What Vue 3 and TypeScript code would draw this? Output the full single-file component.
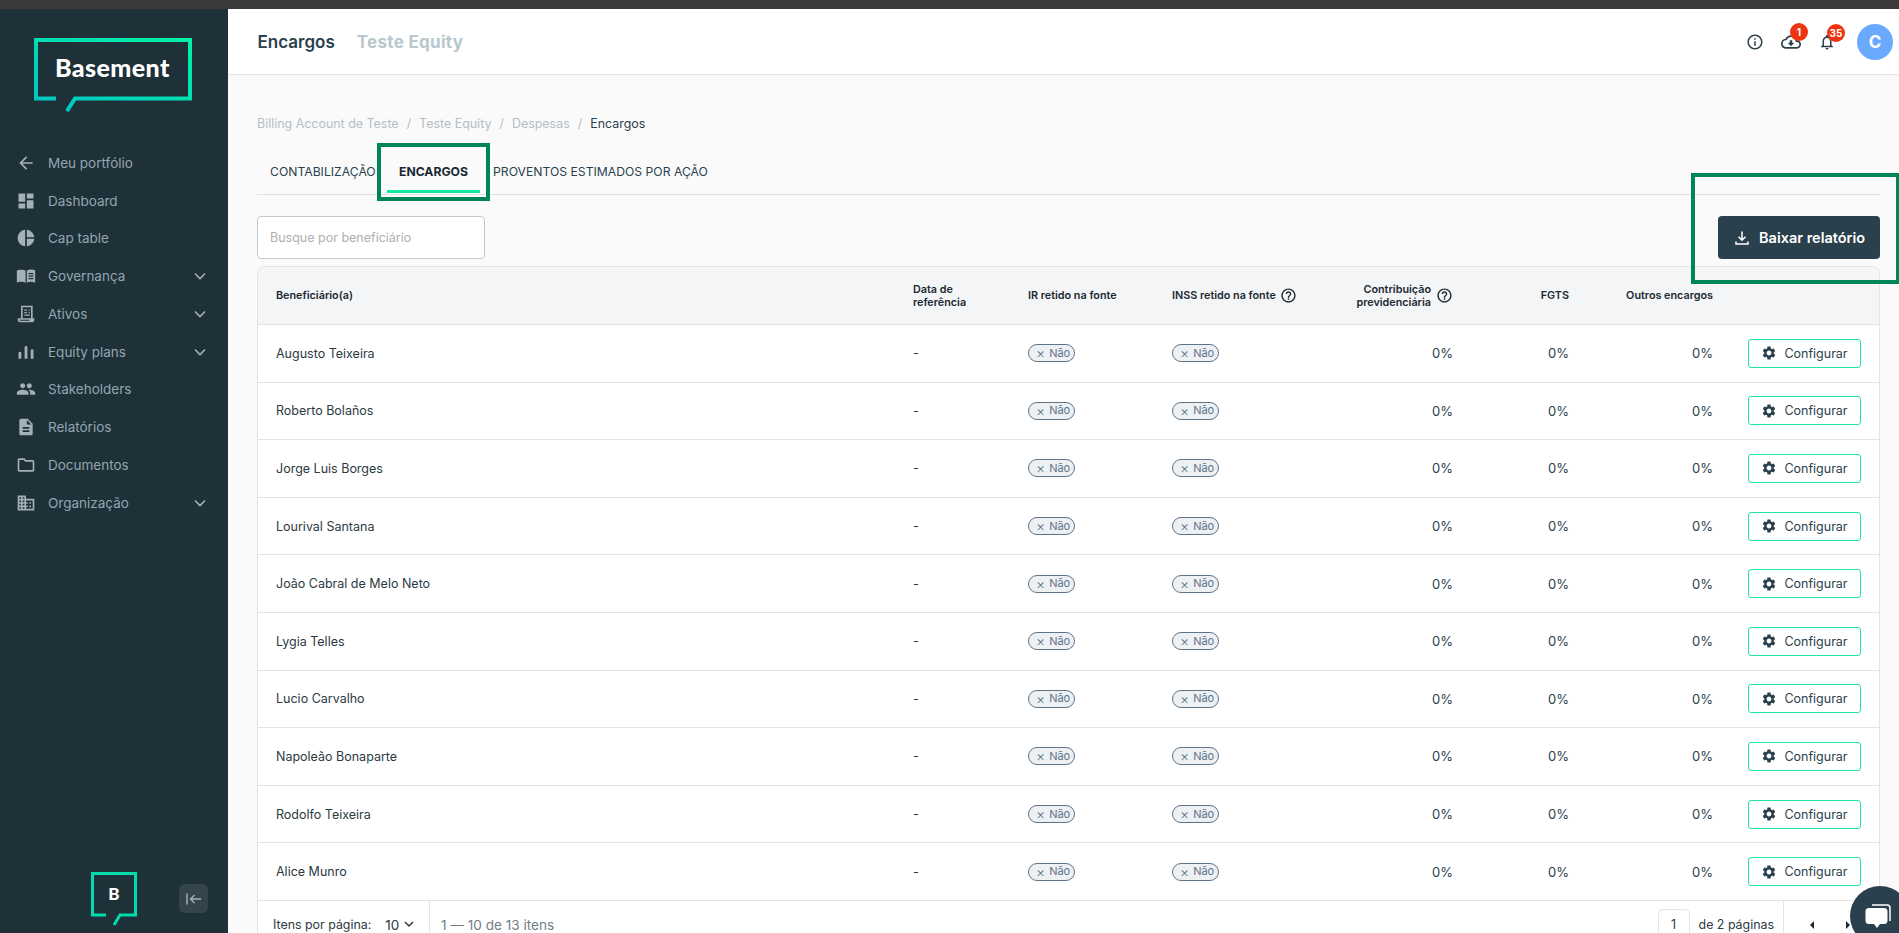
<template>
  <div class="page">
    <div class="window-strip"></div>
    <div class="shell">
      <aside class="sidebar">
        <svg class="logo" width="160" height="76" viewBox="0 0 160 76">
          <defs>
            <linearGradient id="logoStroke" x1="0" y1="1" x2="1" y2="0">
              <stop offset="0" stop-color="#00c4c4" />
              <stop offset="1" stop-color="#00f2a6" />
            </linearGradient>
          </defs>
          <path d="M22 60.5H2V2h154v58.5H41L33 73" fill="none" stroke="url(#logoStroke)" stroke-width="4" />
          <text x="21" y="39" class="logo-text">Basement</text>
        </svg>

        <nav class="nav">
          <a v-for="item in navItems" :key="item.label" class="nav-item">
            <svg class="nav-icon" viewBox="0 0 24 24" width="20" height="20">
              <path :d="item.icon" fill="currentColor" fill-rule="evenodd" />
            </svg>
            <span class="nav-label">{{ item.label }}</span>
            <svg v-if="item.expandable" class="nav-chevron" viewBox="0 0 12 8" width="12" height="8">
              <path d="M1 1.5l5 5 5-5" fill="none" stroke="currentColor" stroke-width="1.6" />
            </svg>
          </a>
        </nav>

        <div class="sidebar-foot">
          <svg class="logo-small" width="46" height="54" viewBox="0 0 46 54">
            <path d="M15 43H1.500V1.500h43V43H29l-6 10" fill="none" stroke="#00dcae" stroke-width="3" />
            <text x="23" y="28" text-anchor="middle" class="logo-small-text">B</text>
          </svg>
          <button class="collapse-btn" type="button">
            <svg viewBox="0 0 16 12" width="16" height="12">
              <path d="M1 0.500v11M15 6H4.500M8.500 2L4.500 6l4 4" fill="none" stroke="currentColor" stroke-width="1.4" />
            </svg>
          </button>
        </div>
      </aside>

      <main class="main">
        <header class="topbar">
          <div class="topbar-title">
            <span class="title-main">Encargos</span>
            <span class="title-sub">Teste Equity</span>
          </div>
          <div class="topbar-actions">
            <svg class="top-icon" viewBox="0 0 24 24" width="18" height="18">
              <path :d="icons.info" fill="currentColor" />
            </svg>
            <span class="top-badge-wrap">
              <svg class="top-icon" viewBox="0 0 24 24" width="20" height="20">
                <path :d="icons.cloud" fill="currentColor" />
              </svg>
              <span class="badge">1</span>
            </span>
            <span class="top-badge-wrap">
              <svg class="top-icon" viewBox="0 0 24 24" width="18" height="18">
                <path :d="icons.bell" fill="currentColor" />
              </svg>
              <span class="badge">35</span>
            </span>
            <span class="avatar">C</span>
          </div>
        </header>

        <section class="content">
          <div class="breadcrumb">
            <span>Billing Account de Teste</span><i>/</i>
            <span>Teste Equity</span><i>/</i>
            <span>Despesas</span><i>/</i>
            <span class="breadcrumb-current">Encargos</span>
          </div>

          <div class="tabs">
            <span class="tab tab-first">CONTABILIZAÇÃO</span>
            <span class="tab is-active">ENCARGOS</span>
            <span class="tab">PROVENTOS ESTIMADOS POR AÇÃO</span>
          </div>

          <div class="toolbar">
            <input class="search" type="text" placeholder="Busque por beneficiário" />
            <button class="download-btn" type="button">
              <svg viewBox="0 0 16 16" width="16" height="16">
                <path d="M8 1.500v8.500M4.500 6.800L8 10.300l3.500-3.500M2 11.500v2.500h12v-2.500" fill="none" stroke="currentColor" stroke-width="1.500" />
              </svg>
              Baixar relatório
            </button>
          </div>

          <div class="table">
            <div class="row row-head">
              <div class="cell">Beneficiário(a)</div>
              <div class="cell">Data de<br />referência</div>
              <div class="cell">IR retido na fonte</div>
              <div class="cell cell-help">
                INSS retido na fonte
                <svg class="help" viewBox="0 0 24 24" width="17" height="17"><path :d="icons.help" fill="currentColor" /></svg>
              </div>
              <div class="cell cell-right">
                <span>Contribuição<br />previdenciária</span>
                <svg class="help" viewBox="0 0 24 24" width="17" height="17"><path :d="icons.help" fill="currentColor" /></svg>
              </div>
              <div class="cell cell-right">FGTS</div>
              <div class="cell cell-right">Outros encargos</div>
              <div class="cell"></div>
            </div>

            <div v-for="name in people" :key="name" class="row">
              <div class="cell cell-name">{{ name }}</div>
              <div class="cell">-</div>
              <div class="cell"><span class="chip"><b>×</b>Não</span></div>
              <div class="cell"><span class="chip"><b>×</b>Não</span></div>
              <div class="cell cell-right">0%</div>
              <div class="cell cell-right">0%</div>
              <div class="cell cell-right">0%</div>
              <div class="cell cell-action">
                <button class="config-btn" type="button">
                  <svg viewBox="0 0 24 24" width="16" height="16"><path :d="icons.gear" fill="currentColor" fill-rule="evenodd" /></svg>
                  Configurar
                </button>
              </div>
            </div>

            <div class="pager">
              <div class="pager-left">
                <span>Itens por página:</span>
                <span class="pager-size">
                  10
                  <svg viewBox="0 0 10 7" width="10" height="7"><path d="M1 1l4 4 4-4" fill="none" stroke="currentColor" stroke-width="1.500" /></svg>
                </span>
              </div>
              <div class="pager-count">1 — 10 de 13 itens</div>
              <div class="pager-right">
                <span class="pager-page">1</span>
                <span class="pager-total">de 2 páginas</span>
                <div class="pager-arrows">
                  <span class="arrow arrow-prev"></span>
                  <span class="arrow arrow-next"></span>
                </div>
              </div>
            </div>
          </div>
        </section>
      </main>
    </div>

    <!-- marcações verdes por cima do print -->
    <div class="mark mark-tab"></div>
    <div class="mark mark-download"></div>

    <div class="chat">
      <svg viewBox="0 0 30 30" width="30" height="30">
        <path d="M9 4h15a3 3 0 0 1 3 3v13" fill="none" stroke="#fff" stroke-width="1.500" />
        <path d="M6 7h15a3.500 3.500 0 0 1 3.500 3.500v9a3.500 3.500 0 0 1-3.500 3.500h-4l-3 4-3-4H6a3.500 3.500 0 0 1-3.500-3.500v-9A3.500 3.500 0 0 1 6 7z" fill="#fff" />
      </svg>
    </div>
  </div>
</template>

<script setup lang="ts">
interface NavItem {
  label: string
  icon: string
  expandable?: boolean
}

const icons = {
  info: 'M11 7h2v2h-2zm0 4h2v6h-2zm1-9C6.48 2 2 6.48 2 12s4.48 10 10 10 10-4.48 10-10S17.52 2 12 2zm0 18c-4.41 0-8-3.59-8-8s3.59-8 8-8 8 3.59 8 8-3.59 8-8 8z',
  cloud: 'M19.35 10.04C18.67 6.59 15.64 4 12 4 9.11 4 6.6 5.64 5.35 8.04 2.34 8.36 0 10.91 0 14c0 3.31 2.69 6 6 6h13c2.76 0 5-2.24 5-5 0-2.64-2.05-4.78-4.65-4.96zM19 18H6c-2.21 0-4-1.79-4-4 0-2.05 1.53-3.76 3.56-3.97l1.07-.11.5-.95C8.08 7.14 9.94 6 12 6c2.62 0 4.88 1.86 5.39 4.43l.3 1.5 1.53.11c1.56.1 2.78 1.41 2.78 2.96 0 1.65-1.35 3-3 3zm-5.55-8h-2.9v3H8l4 4 4-4h-2.55z',
  bell: 'M12 22c1.1 0 2-.9 2-2h-4c0 1.1.89 2 2 2zm6-6v-5c0-3.07-1.64-5.64-4.5-6.32V4c0-.83-.67-1.5-1.5-1.5s-1.5.67-1.5 1.5v.68C7.63 5.36 6 7.92 6 11v5l-2 2v1h16v-1l-2-2zm-2 1H8v-6c0-2.48 1.51-4.5 4-4.5s4 2.02 4 4.5v6z',
  help: 'M11 18h2v-2h-2v2zm1-16C6.48 2 2 6.48 2 12s4.48 10 10 10 10-4.48 10-10S17.52 2 12 2zm0 18c-4.41 0-8-3.59-8-8s3.59-8 8-8 8 3.59 8 8-3.59 8-8 8zm0-14c-2.21 0-4 1.79-4 4h2c0-1.1.9-2 2-2s2 .9 2 2c0 2-3 1.75-3 5h2c0-2.25 3-2.5 3-5 0-2.21-1.79-4-4-4z',
  gear: 'M19.14 12.94c.04-.3.06-.61.06-.94 0-.32-.02-.64-.07-.94l2.03-1.58c.18-.14.23-.41.12-.61l-1.92-3.32c-.12-.22-.37-.29-.59-.22l-2.39.96c-.5-.38-1.03-.7-1.62-.94l-.36-2.54c-.04-.24-.24-.41-.48-.41h-3.84c-.24 0-.43.17-.47.41l-.36 2.54c-.59.24-1.13.57-1.62.94l-2.39-.96c-.22-.08-.47 0-.59.22L2.74 8.87c-.12.21-.08.47.12.61l2.03 1.58c-.05.3-.09.63-.09.94s.02.64.07.94l-2.03 1.58c-.18.14-.23.41-.12.61l1.92 3.32c.12.22.37.29.59.22l2.39-.96c.5.38 1.03.7 1.62.94l.36 2.54c.05.24.24.41.48.41h3.84c.24 0 .44-.17.47-.41l.36-2.54c.59-.24 1.13-.56 1.62-.94l2.39.96c.22.08.47 0 .59-.22l1.92-3.32c.12-.22.07-.47-.12-.61l-2.01-1.58zM12 15.6c-1.98 0-3.6-1.62-3.6-3.6s1.62-3.6 3.6-3.6 3.6 1.62 3.6 3.6-1.62 3.6-3.6 3.6z',
}

const navItems: NavItem[] = [
  { label: 'Meu portfólio', icon: 'M20 11H7.830l5.590-5.590L12 4l-8 8 8 8 1.410-1.410L7.830 13H20v-2z' },
  { label: 'Dashboard', icon: 'M3 13h8V3H3v10zm0 8h8v-6H3v6zm10 0h8V11h-8v10zm0-18v6h8V3h-8z' },
  { label: 'Cap table', icon: 'M11 2v20c-5.070-.5-9-4.790-9-10s3.930-9.500 9-10zm2.030 0v8.990H22c-.47-4.740-4.240-8.520-8.970-8.990zm0 11.010V22c4.740-.47 8.500-4.250 8.970-8.990h-8.970z' },
  { label: 'Governança', expandable: true, icon: 'M1 5.500C3 4.300 8 3.800 11.500 5.500V20C8 18.500 3 18.800 1 20zM13 5.500C15 4 20 3.700 23 5v15c-3-1.200-7-1.500-10 0zM15 8.500h6v1.400h-6zM15 11.500h6v1.400h-6zM15 14.500h6v1.400h-6z' },
  { label: 'Ativos', expandable: true, icon: 'M6 2h14v15h2v2a3 3 0 0 1-3 3H5a3 3 0 0 1-3-3v-2h4zm2 2v13h10V4zM4 19a1 1 0 0 0 1 1h11.300a3 3 0 0 1-.3-1zM10 6.500h3V8h-3zm5 0h1.500V8H15zM10 9.500h3V11h-3zm5 0h1.500V11H15zM10 12.500h6.500V14H10z' },
  { label: 'Equity plans', expandable: true, icon: 'M3 13.500a1.700 1.700 0 0 1 3.400 0V20H3zM10.300 6.500a1.700 1.700 0 0 1 3.400 0V20h-3.400zM17.600 10.500a1.700 1.700 0 0 1 3.400 0V20h-3.400z' },
  { label: 'Stakeholders', icon: 'M16 11c1.660 0 2.990-1.340 2.990-3S17.660 5 16 5c-1.660 0-3 1.340-3 3s1.340 3 3 3zm-8 0c1.660 0 2.990-1.340 2.990-3S9.660 5 8 5C6.340 5 5 6.340 5 8s1.340 3 3 3zm0 2c-2.330 0-7 1.170-7 3.500V19h14v-2.500c0-2.330-4.670-3.500-7-3.500zm8 0c-.29 0-.62.02-.97.05 1.160.84 1.970 1.970 1.970 3.450V19h6v-2.500c0-2.330-4.670-3.500-7-3.500z' },
  { label: 'Relatórios', icon: 'M14 2H6c-1.100 0-1.990.9-1.990 2L4 20c0 1.100.89 2 1.990 2H18c1.100 0 2-.9 2-2V8l-6-6zm2 16H8v-2h8v2zm0-4H8v-2h8v2zm-3-5V3.500L18.500 9H13z' },
  { label: 'Documentos', icon: 'M9.170 6l2 2H20v10H4V6h5.170M10 4H4c-1.100 0-1.990.9-1.990 2L2 18c0 1.100.9 2 2 2h16c1.100 0 2-.9 2-2V8c0-1.100-.9-2-2-2h-8l-2-2z' },
  { label: 'Organização', expandable: true, icon: 'M12 7V3H2v18h20V7H12zM6 19H4v-2h2v2zm0-4H4v-2h2v2zm0-4H4V9h2v2zm0-4H4V5h2v2zm4 12H8v-2h2v2zm0-4H8v-2h2v2zm0-4H8V9h2v2zm0-4H8V5h2v2zm10 12h-8v-2h2v-2h-2v-2h2v-2h-2V9h8v10zm-2-8h-2v2h2v-2zm0 4h-2v2h2v-2z' },
]

const people = [
  'Augusto Teixeira',
  'Roberto Bolaños',
  'Jorge Luis Borges',
  'Lourival Santana',
  'João Cabral de Melo Neto',
  'Lygia Telles',
  'Lucio Carvalho',
  'Napoleão Bonaparte',
  'Rodolfo Teixeira',
  'Alice Munro',
]
</script>

<style>
html,
body {
  margin: 0;
  overflow: hidden;
}
</style>

<style scoped>
.page {
  position: relative;
  width: 1899px;
  height: 933px;
  overflow: hidden;
  background: #fafafb;
  font-family: 'Inter', 'Noto Sans', sans-serif;
  color: #2a414d;
}

.window-strip {
  height: 9px;
  background: #3a3a3a;
}

.shell {
  display: flex;
  height: 924px;
}

.sidebar {
  position: relative;
  flex: 0 0 228px;
  background: #1e3038;
  color: #93a5b0;
}

.logo {
  display: block;
  margin: 29px 0 0 34px;
}

.logo-text {
  font-family: 'Lato', 'Inter', sans-serif;
  font-weight: 900;
  font-size: 25px;
  letter-spacing: 0.4px;
  fill: #fff;
}

.nav {
  display: flex;
  flex-direction: column;
  margin-top: 30px;
}

.nav-item {
  display: flex;
  align-items: center;
  height: 37.75px;
  padding: 0 22px 0 16px;
}

.nav-icon {
  flex: none;
  color: #a3b0b8;
}

.nav-label {
  flex: 1;
  margin-left: 12px;
  font-size: 13.5px;
}

.nav-chevron {
  color: #a3b0b8;
}

.sidebar-foot {
  position: absolute;
  left: 91px;
  bottom: 7px;
  display: flex;
  align-items: flex-start;
  gap: 42px;
  height: 54px;
}

.logo-small-text {
  font-family: 'Lato', 'Inter', sans-serif;
  font-weight: 900;
  font-size: 17px;
  fill: #fff;
}

.collapse-btn {
  display: flex;
  align-items: center;
  justify-content: center;
  width: 29px;
  height: 29px;
  margin-top: 12px;
  padding: 0;
  border: 0;
  border-radius: 6px;
  background: #34444c;
  color: #a3b0b8;
}

.main {
  flex: 1;
  min-width: 0;
  display: flex;
  flex-direction: column;
}

.topbar {
  flex: 0 0 66px;
  box-sizing: border-box;
  display: flex;
  align-items: center;
  justify-content: space-between;
  padding: 0 6px 0 29.5px;
  background: #fff;
  border-bottom: 1px solid #e4e4e4;
}

.topbar-title {
  display: flex;
  align-items: baseline;
  gap: 22px;
  font-size: 17px;
  font-weight: 600;
}

.title-main {
  color: #2a414d;
}

.title-sub {
  color: #b9c7ce;
  font-weight: 700;
  letter-spacing: 0.3px;
}

.topbar-actions {
  display: flex;
  align-items: center;
}

.top-icon {
  display: block;
  color: #2a414d;
}

.top-badge-wrap {
  position: relative;
  display: block;
  margin-left: 17px;
}

.badge {
  position: absolute;
  top: -9px;
  left: 9px;
  min-width: 18px;
  height: 18px;
  box-sizing: border-box;
  padding: 0 2px;
  border-radius: 9px;
  background: #ee3311;
  color: #fff;
  font-size: 10px;
  font-weight: 700;
  line-height: 18px;
  text-align: center;
}

.avatar {
  width: 36px;
  height: 36px;
  margin-left: 21px;
  border-radius: 50%;
  background: #69aaff;
  color: #fff;
  font-size: 17px;
  font-weight: 700;
  line-height: 36px;
  text-align: center;
}

.content {
  flex: 1;
  min-height: 0;
  padding: 0 19px 0 29px;
}

.breadcrumb {
  margin-top: 40px;
  height: 16px;
  display: flex;
  align-items: center;
  font-size: 12.45px;
  color: #b3bec5;
}

.breadcrumb i {
  margin: 0 8px;
  font-style: normal;
}

.breadcrumb-current {
  color: #2a414d;
}

.tabs {
  display: flex;
  height: 46px;
  margin-top: 17px;
  padding-left: 13px;
  border-bottom: 1px solid #e0e0e0;
  font-size: 12.2px;
}

.tab {
  box-sizing: border-box;
  height: 45px;
  padding-top: 16px;
  color: #2a414d;
}

.tab-first {
  width: 117px;
  white-space: nowrap;
}

.tab.is-active {
  width: 93px;
  margin-right: 13px;
  border-bottom: 3px solid #12e6a0;
  color: #1b2a32;
  font-weight: 700;
  text-align: center;
}

.toolbar {
  display: flex;
  justify-content: space-between;
  margin-top: 21px;
}

.search {
  box-sizing: border-box;
  width: 228px;
  height: 43px;
  padding: 0 12px;
  border: 1px solid #c8c8c8;
  border-radius: 4px;
  background: #fff;
  font-family: inherit;
  font-size: 12.5px;
  outline: none;
}

.search::placeholder {
  color: #b0b0b0;
}

.download-btn {
  display: flex;
  align-items: center;
  gap: 9px;
  box-sizing: border-box;
  width: 162px;
  height: 43px;
  padding: 0 0 0 16px;
  border: 0;
  border-radius: 4px;
  background: #2a414d;
  color: #fff;
  font-family: inherit;
  font-size: 14.5px;
  font-weight: 600;
}

.table {
  margin-top: 7px;
  border: 1px solid #e4e4e4;
  border-bottom: 0;
  border-radius: 8px 8px 0 0;
  background: #fff;
}

.row {
  box-sizing: border-box;
  display: grid;
  grid-template-columns: 637px 115px 144px 143px 175px 116px 144px 1fr;
  align-items: center;
  height: 57.6px;
  border-bottom: 1px solid #e4e4e4;
  font-size: 13px;
}

.row-head {
  height: 58px;
  background: #f4f5f7;
  border-radius: 8px 8px 0 0;
  font-size: 10.8px;
  font-weight: 600;
  line-height: 13px;
  color: #1b2a32;
}

.cell {
  padding-left: 18px;
}

.cell-help {
  display: flex;
  align-items: center;
  gap: 4px;
  white-space: nowrap;
}

.cell-right {
  display: flex;
  align-items: center;
  justify-content: flex-end;
  gap: 5px;
  padding: 0 19px 0 0;
  text-align: right;
}

.cell-name {
  color: #2c3a42;
  font-size: 12.5px;
}

.chip {
  display: inline-flex;
  align-items: center;
  gap: 4px;
  box-sizing: border-box;
  height: 18px;
  padding: 0 4px 0 7px;
  border: 1px solid #5f7389;
  border-radius: 9px;
  background: #eef1f4;
  color: #5f7389;
  font-size: 11px;
  line-height: 1;
}

.chip b {
  font-weight: 300;
  font-size: 14px;
}

.help {
  flex: none;
  color: #1b2a32;
}

.cell-action {
  padding-left: 16px;
}

.config-btn {
  display: flex;
  align-items: center;
  justify-content: center;
  gap: 7px;
  box-sizing: border-box;
  width: 113px;
  height: 29px;
  padding: 0;
  border: 1px solid #1ee6a6;
  border-radius: 3px;
  background: #fff;
  color: #2a414d;
  font-family: inherit;
  font-size: 12.5px;
}

.pager {
  display: flex;
  align-items: center;
  height: 48px;
  font-size: 12.4px;
  color: #2c3a42;
}

.pager-left {
  display: flex;
  align-items: center;
  gap: 14px;
  box-sizing: border-box;
  width: 172px;
  height: 100%;
  padding-left: 15px;
  border-right: 1px solid #e4e4e4;
}

.pager-size {
  display: flex;
  align-items: center;
  gap: 5px;
  font-size: 13.5px;
}

.pager-count {
  flex: 1;
  padding-left: 11px;
  color: #6f7f88;
  font-size: 13.6px;
}

.pager-right {
  display: flex;
  align-items: center;
  height: 100%;
}

.pager-page {
  box-sizing: border-box;
  width: 32px;
  height: 32px;
  border: 1px solid #e4e4e4;
  border-radius: 5px;
  line-height: 30px;
  text-align: center;
}

.pager-total {
  margin-left: 9px;
  padding-right: 9px;
}

.pager-arrows {
  display: flex;
  gap: 32px;
  align-items: center;
  box-sizing: border-box;
  width: 96px;
  height: 100%;
  padding-left: 26px;
  border-left: 1px solid #e4e4e4;
}

.arrow {
  width: 0;
  height: 0;
  border-top: 4px solid transparent;
  border-bottom: 4px solid transparent;
}

.arrow-prev {
  border-right: 4px solid #1b2a32;
}

.arrow-next {
  border-left: 4px solid #1b2a32;
}

.mark {
  position: absolute;
  box-sizing: border-box;
  border: 4px solid #00855a;
}

.mark-tab {
  left: 377px;
  top: 143px;
  width: 113px;
  height: 58px;
}

.mark-download {
  left: 1691px;
  top: 173px;
  width: 208px;
  height: 111px;
  border-right-width: 3px;
}

.chat {
  position: absolute;
  left: 1850px;
  top: 886px;
  width: 60px;
  height: 60px;
  display: flex;
  align-items: center;
  justify-content: flex-start;
  padding-left: 13px;
  box-sizing: border-box;
  border-radius: 50%;
  background: #2a414d;
}
</style>
